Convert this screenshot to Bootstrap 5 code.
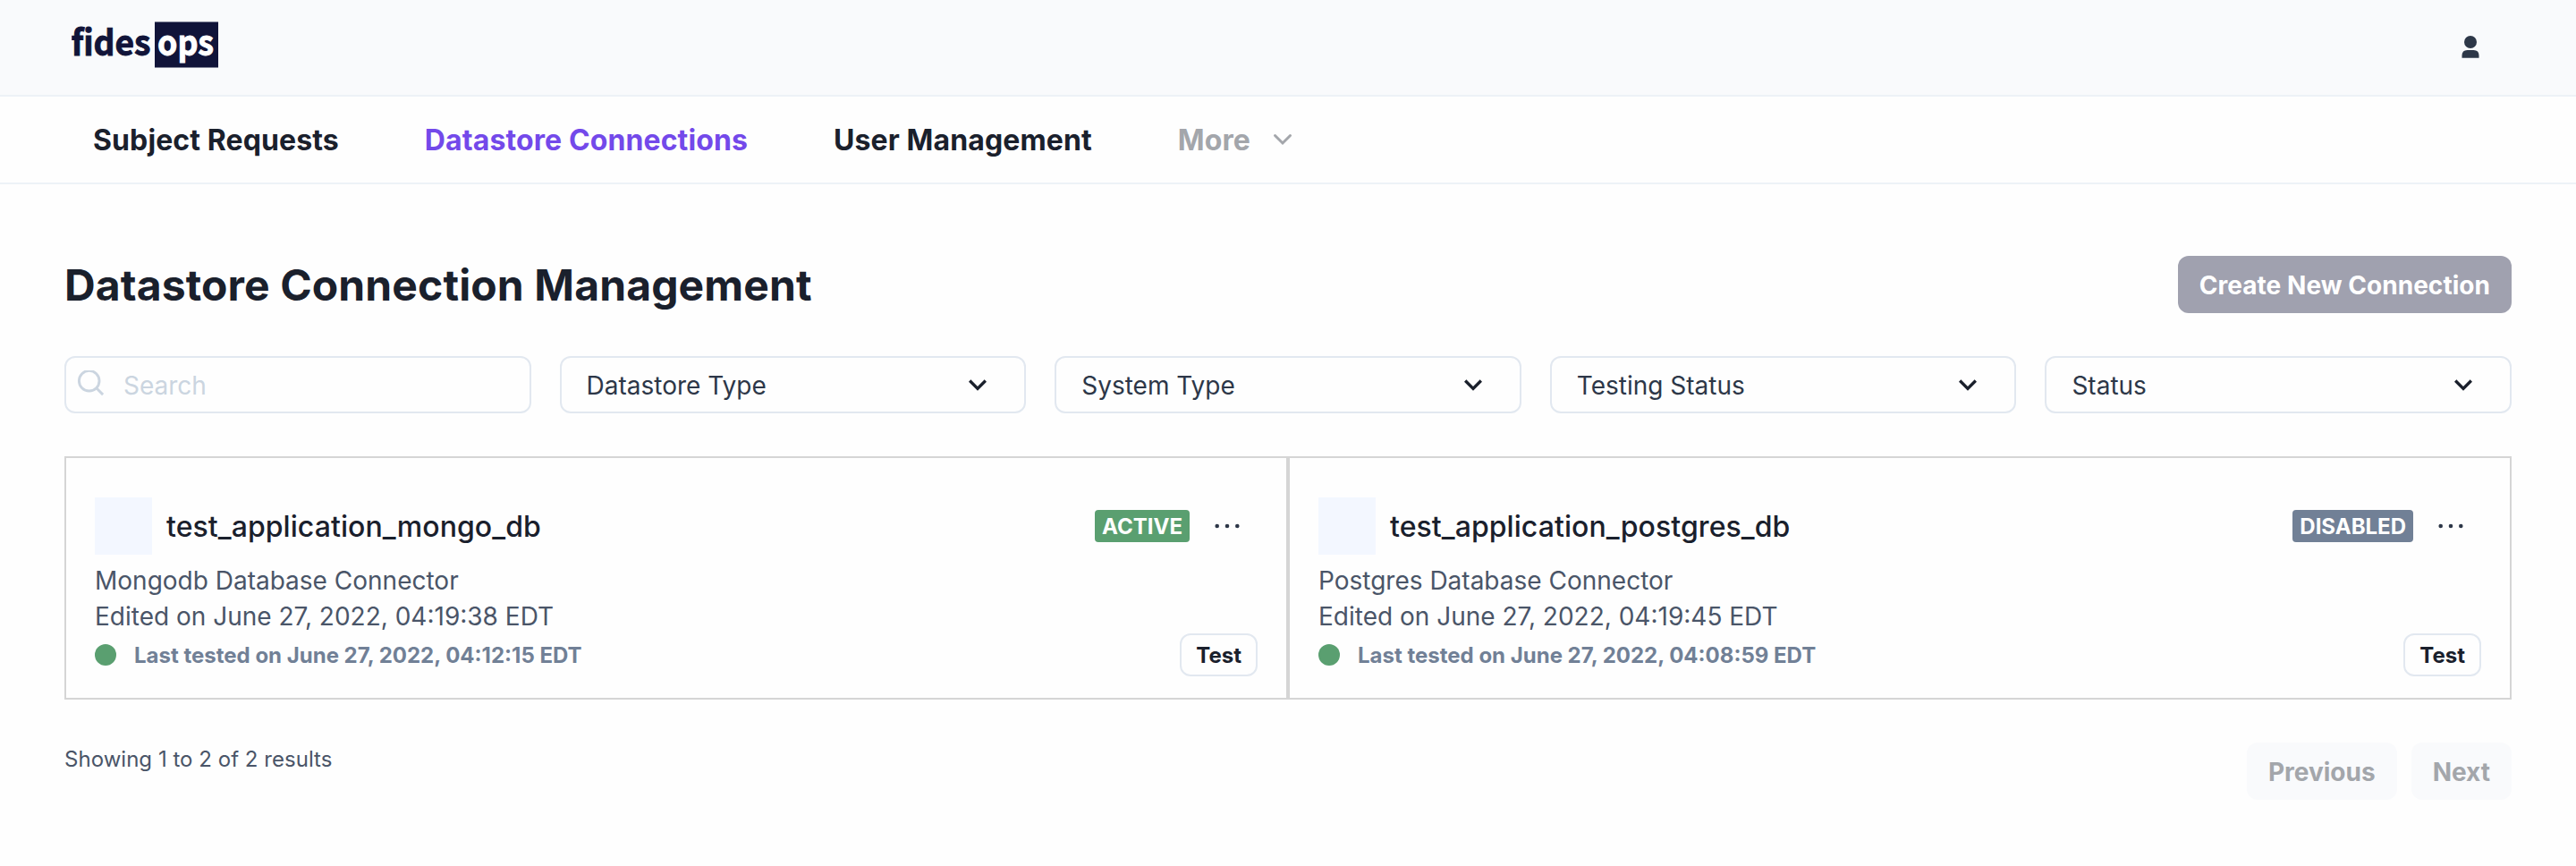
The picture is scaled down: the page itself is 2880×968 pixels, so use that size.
<!DOCTYPE html>
<html lang="en">
<head>
<meta charset="utf-8">
<title>fidesops</title>
<link href="https://cdn.jsdelivr.net/npm/bootstrap@5.3.0/dist/css/bootstrap.min.css" rel="stylesheet">
<style>
body{font-family:Inter,"Liberation Sans",sans-serif;font-size:28px;line-height:40px;color:#1a202c;background:#fefefe}
.topbar{height:108px;background:#f9fafc;border-bottom:2px solid #edf2f7;padding:0 98px 0 80px}
.user-icon{margin-right:10px}
.mainnav{height:98px;border-bottom:2px solid #edf2f7;padding:2px 104px 0;gap:96px;background:#fefefe}
.mainnav .nav-link{padding:0;font-size:32px;line-height:48px;font-weight:700;color:#1a202c;letter-spacing:.11px}
.mainnav .nav-link.active{color:#7349ea}
.mainnav .nav-link.disabled{color:#a3a6ab}
.page-body{padding:80px 72px 0}
.title-row{height:64px}
h1{font-size:48px;line-height:64px;font-weight:700;margin:0;padding-top:1px;letter-spacing:.12px}
.btn{border-radius:12px;font-weight:700;font-size:28px;line-height:40px;padding:13px 24px 11px;border:0}
.btn-create,.btn-create:disabled{background:#a0a1af;color:#fff;opacity:1;letter-spacing:.04px}
.btn-page:disabled{background:#f9fafc;color:#a3a6ab;opacity:1}
.filters{display:grid;grid-template-columns:repeat(5,1fr);gap:32px;margin-top:48px}
.field{height:64px;border:2px solid #e2e8f0;border-radius:12px;padding:1px 32px 0 28px;color:#2d3748;background:#fefefe;text-align:left}
.field svg{margin-top:-1px}
.field.search-field{padding:1px 12px 0;color:#cbd5e0}
.search-text{margin-left:20px}
.connections{margin-top:48px;display:grid;grid-template-columns:1fr 1fr}
.connection{height:272px;border:2px solid #d5d5d5;padding:44px 32px 0}
.db-logo{width:64px;height:64px;background:#f3f7ff}
.db-name{font-size:32px;line-height:48px;font-weight:500;margin-left:16px;padding-top:2px;color:#1a202c;letter-spacing:.07px}
.status{font-size:24px;line-height:36px;height:36px;border-radius:4px;padding:1px 8px 0;font-weight:700;color:#fff}
.status-on{background:#5a9f70}.status-off{background:#718096}
.more{margin:0 18px 0 26px;width:32px}
.meta{color:#4a5568;margin-top:9px}
.dot{width:24px;height:24px;border-radius:50%;background:#5a9f70}
.tested{height:48px;margin-top:-1px;font-size:24px;font-weight:700;color:#718096}
.tested-text{margin-left:20px;padding-top:1px}
.btn-test{height:48px;border:2px solid #e2e8f0;font-size:24px;line-height:36px;padding:5px 16px 3px;color:#1a202c}
.footer-row{margin-top:48px}
.showing{font-size:24px;line-height:36px;padding-top:1px;color:#4a5568;letter-spacing:.03px}
svg{display:block;flex:none}
</style>
</head>
<body>
<header class="topbar d-flex justify-content-between">
  <svg width="166" height="108" viewBox="80 0 166 108" aria-label="fidesops" font-family="'Noto Sans CJK SC',sans-serif" font-weight="700" font-size="39" stroke-width=".9">
    <text x="79.500" y="62" fill="#111439" stroke="#111439" textLength="89" lengthAdjust="spacingAndGlyphs">fides</text>
    <rect x="173" y="24.500" width="71" height="51" fill="#111439"/>
    <text x="176" y="62" fill="#fff" stroke="#fff" textLength="63" lengthAdjust="spacingAndGlyphs">ops</text>
  </svg>
  <svg class="user-icon" width="20" height="108" viewBox="2752 0 20 108" fill="#2d3748"><circle cx="2762" cy="47" r="7"/><path d="M2752.500 64.700V62q0-6 6-6h7q6 0 6 6v2.700z"/></svg>
</header>
<nav class="mainnav nav align-items-center">
  <a class="nav-link" href="#">Subject Requests</a>
  <a class="nav-link active" href="#">Datastore Connections</a>
  <a class="nav-link" href="#">User Management</a>
  <a class="nav-link disabled d-flex align-items-center" href="#">More
    <svg class="ms-4" width="24" height="24" viewBox="0 0 24 24" fill="none" stroke="#a3a6ab" stroke-width="3" stroke-linecap="round"><path d="M3.500 6.500L12 15l8.500-8.500"/></svg></a>
</nav>
<main class="page-body">
  <div class="title-row d-flex justify-content-between align-items-start">
    <h1>Datastore Connection Management</h1>
    <button class="btn btn-create" disabled>Create New Connection</button>
  </div>
  <div class="filters">
    <div class="field search-field d-flex align-items-center">
      <svg width="32" height="32" viewBox="0 0 32 32" fill="none" stroke="#cbd5e0" stroke-width="2.900"><circle cx="13.700" cy="11.700" r="11.300"/><path d="M21.500 19.500l7.600 7.600"/></svg>
      <span class="search-text">Search</span>
    </div>
    <button class="field d-flex align-items-center justify-content-between">Datastore Type<svg width="40" height="40" viewBox="0 0 24 24" fill="#1a202c"><path d="M16.590 8.590L12 13.170 7.410 8.590 6 10l6 6 6-6z"/></svg></button>
    <button class="field d-flex align-items-center justify-content-between">System Type<svg width="40" height="40" viewBox="0 0 24 24" fill="#1a202c"><path d="M16.590 8.590L12 13.170 7.410 8.590 6 10l6 6 6-6z"/></svg></button>
    <button class="field d-flex align-items-center justify-content-between">Testing Status<svg width="40" height="40" viewBox="0 0 24 24" fill="#1a202c"><path d="M16.590 8.590L12 13.170 7.410 8.590 6 10l6 6 6-6z"/></svg></button>
    <button class="field d-flex align-items-center justify-content-between">Status<svg width="40" height="40" viewBox="0 0 24 24" fill="#1a202c"><path d="M16.590 8.590L12 13.170 7.410 8.590 6 10l6 6 6-6z"/></svg></button>
  </div>
  <div class="connections">
    <section class="connection">
      <div class="d-flex align-items-center">
        <div class="db-logo"></div><div class="db-name">test_application_mongo_db</div>
        <span class="status status-on ms-auto">ACTIVE</span>
        <svg class="more" width="32" height="32" viewBox="0 0 32 32" fill="#2d3748"><circle cx="4.700" cy="16" r="2.300"/><circle cx="16" cy="16" r="2.300"/><circle cx="27.300" cy="16" r="2.300"/></svg>
      </div>
      <div class="meta">Mongodb Database Connector<br>Edited on June 27, 2022, 04:19:38 EDT</div>
      <div class="tested d-flex align-items-center"><span class="dot"></span><span class="tested-text">Last tested on June 27, 2022, 04:12:15 EDT</span><button class="btn btn-test ms-auto">Test</button></div>
    </section>
    <section class="connection">
      <div class="d-flex align-items-center">
        <div class="db-logo"></div><div class="db-name">test_application_postgres_db</div>
        <span class="status status-off ms-auto">DISABLED</span>
        <svg class="more" width="32" height="32" viewBox="0 0 32 32" fill="#2d3748"><circle cx="4.700" cy="16" r="2.300"/><circle cx="16" cy="16" r="2.300"/><circle cx="27.300" cy="16" r="2.300"/></svg>
      </div>
      <div class="meta">Postgres Database Connector<br>Edited on June 27, 2022, 04:19:45 EDT</div>
      <div class="tested d-flex align-items-center"><span class="dot"></span><span class="tested-text">Last tested on June 27, 2022, 04:08:59 EDT</span><button class="btn btn-test ms-auto">Test</button></div>
    </section>
  </div>
  <div class="footer-row d-flex justify-content-between align-items-start">
    <div class="showing">Showing 1 to 2 of 2 results</div>
    <div class="d-flex gap-3"><button class="btn btn-page" disabled>Previous</button><button class="btn btn-page" disabled>Next</button></div>
  </div>
</main>
<script src="https://cdn.jsdelivr.net/npm/bootstrap@5.3.0/dist/js/bootstrap.bundle.min.js"></script>
</body>
</html>
